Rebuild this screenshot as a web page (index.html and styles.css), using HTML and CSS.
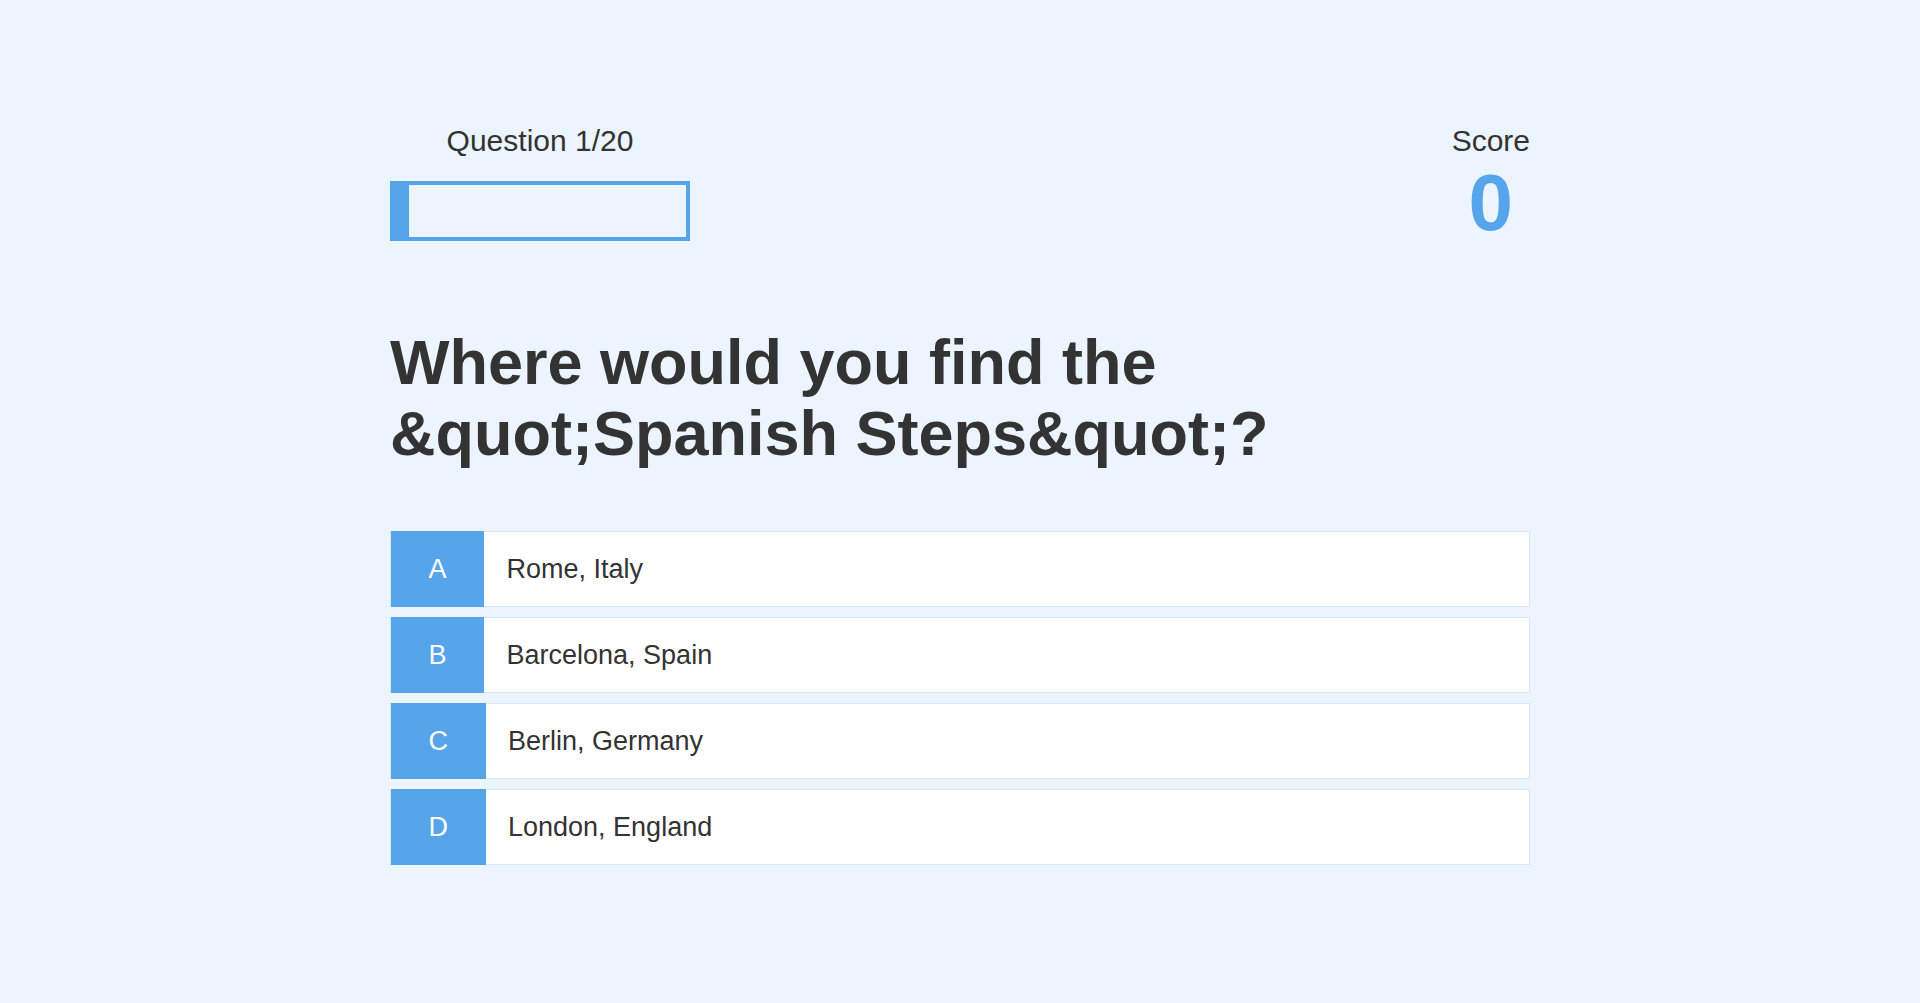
FILE: index.html
```html
<!DOCTYPE html>
<html lang="en">
<head>
<meta charset="utf-8">
<title>Quick Quiz</title>
<link rel="stylesheet" href="styles.css">
</head>
<body>
<div class="container">
  <div class="game">
    <div class="hud">
      <div class="hud-item">
        <p class="hud-prefix">Question 1/20</p>
        <div class="progress-bar">
          <div class="progress-fill"></div>
        </div>
      </div>
      <div class="hud-item">
        <p class="hud-prefix">Score</p>
        <h1 class="hud-main-text">0</h1>
      </div>
    </div>
    <h2 class="question">Where would you find the &amp;quot;Spanish Steps&amp;quot;?</h2>
    <div class="choice-container">
      <p class="choice-prefix">A</p>
      <p class="choice-text">Rome, Italy</p>
    </div>
    <div class="choice-container">
      <p class="choice-prefix">B</p>
      <p class="choice-text">Barcelona, Spain</p>
    </div>
    <div class="choice-container">
      <p class="choice-prefix">C</p>
      <p class="choice-text">Berlin, Germany</p>
    </div>
    <div class="choice-container">
      <p class="choice-prefix">D</p>
      <p class="choice-text">London, England</p>
    </div>
  </div>
</div>
</body>
</html>
```

FILE: styles.css
```css
* {
  box-sizing: border-box;
  margin: 0;
  padding: 0;
}

html, body {
  height: 100%;
}

body {
  background: #ecf5ff;
  color: #333333;
  font-family: "Liberation Sans", Arial, sans-serif;
  overflow: hidden;
}

.container {
  width: 1140px;
  margin: 0 auto;
  padding-top: 124px;
}

.hud {
  display: flex;
  justify-content: space-between;
  align-items: flex-start;
}

.hud-item {
  display: flex;
  flex-direction: column;
  align-items: center;
}

.hud-prefix {
  font-size: 30px;
  line-height: 34px;
  text-align: center;
}

.progress-bar {
  width: 300px;
  height: 60px;
  margin-top: 23px;
  border: 4px solid #56a5eb;
}

.progress-fill {
  width: 5%;
  height: 100%;
  background: #56a5eb;
}

.hud-main-text {
  font-size: 80px;
  line-height: 90px;
  font-weight: bold;
  color: #56a5eb;
  text-align: center;
}

.question {
  margin-top: 79px;
  margin-bottom: 62px;
  font-size: 63px;
  line-height: 71px;
  font-weight: bold;
}

.choice-container {
  display: flex;
  margin-bottom: 10px;
  width: 100%;
  font-size: 27px;
  line-height: 30px;
  border: 1px solid rgba(86, 165, 235, 0.25);
  background: #ffffff;
}

.choice-prefix {
  flex-shrink: 0;
  margin: -1px 0;
  padding: 23px 37.5px;
  background: #56a5eb;
  color: #ffffff;
}

.choice-text {
  flex: 1;
  padding: 22px 22.5px;
}
```
